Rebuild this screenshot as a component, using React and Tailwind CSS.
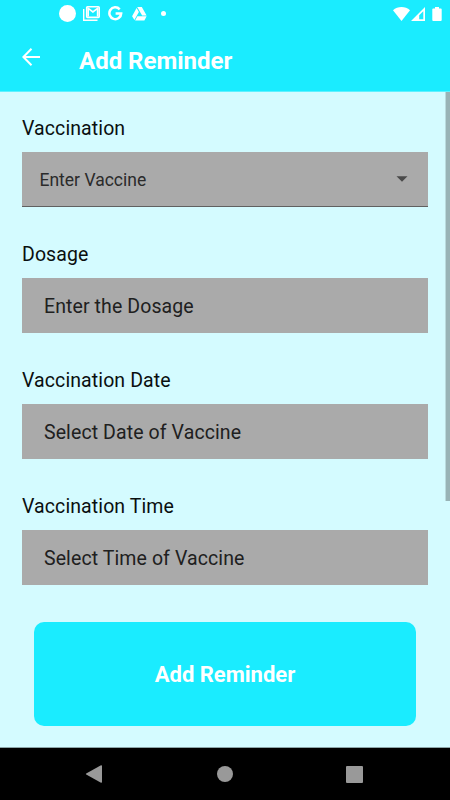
import React from 'react';

const fields = [
    { label: 'Dosage', placeholder: 'Enter the Dosage' },
    { label: 'Vaccination Date', placeholder: 'Select Date of Vaccine' },
    { label: 'Vaccination Time', placeholder: 'Select Time of Vaccine' },
];

function StatusBar() {
    return (
        <div className="h-[27px] pl-[59px] pr-2 flex items-center justify-between text-white">
            <div className="flex items-center">
                <svg width="17" height="17" viewBox="0 0 17 17" fill="currentColor">
                    <circle cx="8.5" cy="8.5" r="8.5" />
                </svg>

                {/* Mail */}
                <svg className="ml-[7px]" width="17" height="15" viewBox="0 0 17 15" fill="none" stroke="currentColor">
                    <path d="M0.7 3V14.2H14.5" strokeWidth="1.4" />
                    <rect x="3.7" y="0.8" width="12.5" height="10.6" rx="0.8" strokeWidth="1.6" />
                    <path d="M5.2 10.5V2.4L9.9 6L14.6 2.4V10.5" strokeWidth="1.6" />
                </svg>

                {/* Google */}
                <svg className="ml-2" width="15" height="15" viewBox="0 0 15 15" fill="none" stroke="currentColor" strokeWidth="2.5">
                    <path d="M11.7 3.3A5.9 5.9 0 1 0 13.2 7.4H7.6" />
                </svg>

                {/* Drive */}
                <svg className="ml-[9px]" width="15" height="14" viewBox="0 0 15 14" fill="currentColor">
                    <path d="M5.2 0H9.8L14.6 8.4H10.1Z" />
                    <path d="M4.6 1L6.9 5L2.4 13L0.1 9.2Z" />
                    <path d="M5.4 9.3H14.6L12.4 13.5H3.1Z" />
                </svg>

                <span className="ml-[14px] size-[5px] rounded-full bg-white" />
            </div>

            <div className="flex items-center">
                <svg width="17" height="14" viewBox="0 0 17 14" fill="currentColor">
                    <path d="M0 3.3C4.7-1 12.3-1 17 3.3L8.5 14Z" />
                </svg>
                <svg className="ml-px" width="15" height="14" viewBox="0 0 15 14" fill="currentColor" fillRule="evenodd">
                    <path d="M0 14L14 0V14ZM8.2 12.3H12.3V4.2L8.2 8.3Z" />
                </svg>
                <svg className="ml-[6px]" width="10" height="14" viewBox="0 0 10 14" fill="currentColor">
                    <path d="M3 0H7V1.4H8.8Q9.7 1.4 9.7 2.3V13Q9.7 14 8.8 14H1.2Q0.3 14 0.3 13V2.3Q0.3 1.4 1.2 1.4H3Z" />
                </svg>
            </div>
        </div>
    );
}

function Field({ label, placeholder }) {
    return (
        <div className="h-[126px]">
            <div className="h-[35px] text-[19.5px] leading-6 tracking-[0.1px] text-[#0a0f0f]">{label}</div>
            <div className="h-[55px] pl-[22px] pt-[2px] flex items-center bg-[#aaaaaa] text-[19.5px] tracking-[0.1px] text-[#202020]">
                {placeholder}
            </div>
        </div>
    );
}

function App() {
    return (
        <div className="relative w-[450px] h-[800px] overflow-hidden flex flex-col bg-[#d4fbff] font-['Roboto',sans-serif]">
            <header className="h-[92px] bg-[#1aecff] border-b border-[#5ef1ff]">
                <StatusBar />
                <div className="h-[65px] pl-[22px] flex items-center">
                    <svg className="-mt-[5px]" width="18" height="18" viewBox="0 0 18 18" fill="none" stroke="white" strokeWidth="2">
                        <path d="M18 9H1.6M9.5 0.8L1.4 9L9.5 17.2" />
                    </svg>
                    <h1 className="ml-[39px] pt-[2px] text-[24px] font-bold text-white">Add Reminder</h1>
                </div>
            </header>

            <main className="h-[656px] px-[22px] pt-[25px] border-b border-[#8ba5a8]">
                <div className="h-[126px]">
                    <div className="h-[35px] text-[19.5px] leading-6 tracking-[0.1px] text-[#0a0f0f]">Vaccination</div>
                    <div className="h-[55px] pl-[17.5px] pr-5 flex items-center justify-between bg-[#aaaaaa] border-b border-[#606060] text-[17.5px] text-[#2b2b2b]">
                        <span className="pt-[3px]">Enter Vaccine</span>
                        <svg width="12" height="6" viewBox="0 0 12 6" fill="#4a4a4a">
                            <path d="M0.5 0.3H11.5L6 5.8Z" />
                        </svg>
                    </div>
                </div>

                {fields.map((field) => (
                    <Field key={field.label} label={field.label} placeholder={field.placeholder} />
                ))}

                <button className="block w-[382px] h-[104px] mt-px ml-[12px] rounded-[10px] bg-[#1aecff] text-[22px] font-bold text-white">
                    Add Reminder
                </button>
            </main>

            {/* Scroll thumb */}
            <div className="absolute right-0 top-[92px] w-[5px] h-[409px] border-l border-[#b9dadd] bg-[#98b3b6]" />

            <nav className="h-[52px] pl-[85px] pr-[87px] flex items-center justify-between bg-black">
                <svg width="18" height="18" viewBox="0 0 18 18" fill="#999999">
                    <path d="M1.2 8.4L16 0.2Q17 0 17 1V17Q17 18 16 17.8L1.2 9.6Q0.4 9 1.2 8.4Z" />
                </svg>
                <span className="size-4 rounded-full bg-[#999999]" />
                <span className="size-[17px] rounded-[1px] bg-[#999999]" />
            </nav>
        </div>
    );
}

export default App;
